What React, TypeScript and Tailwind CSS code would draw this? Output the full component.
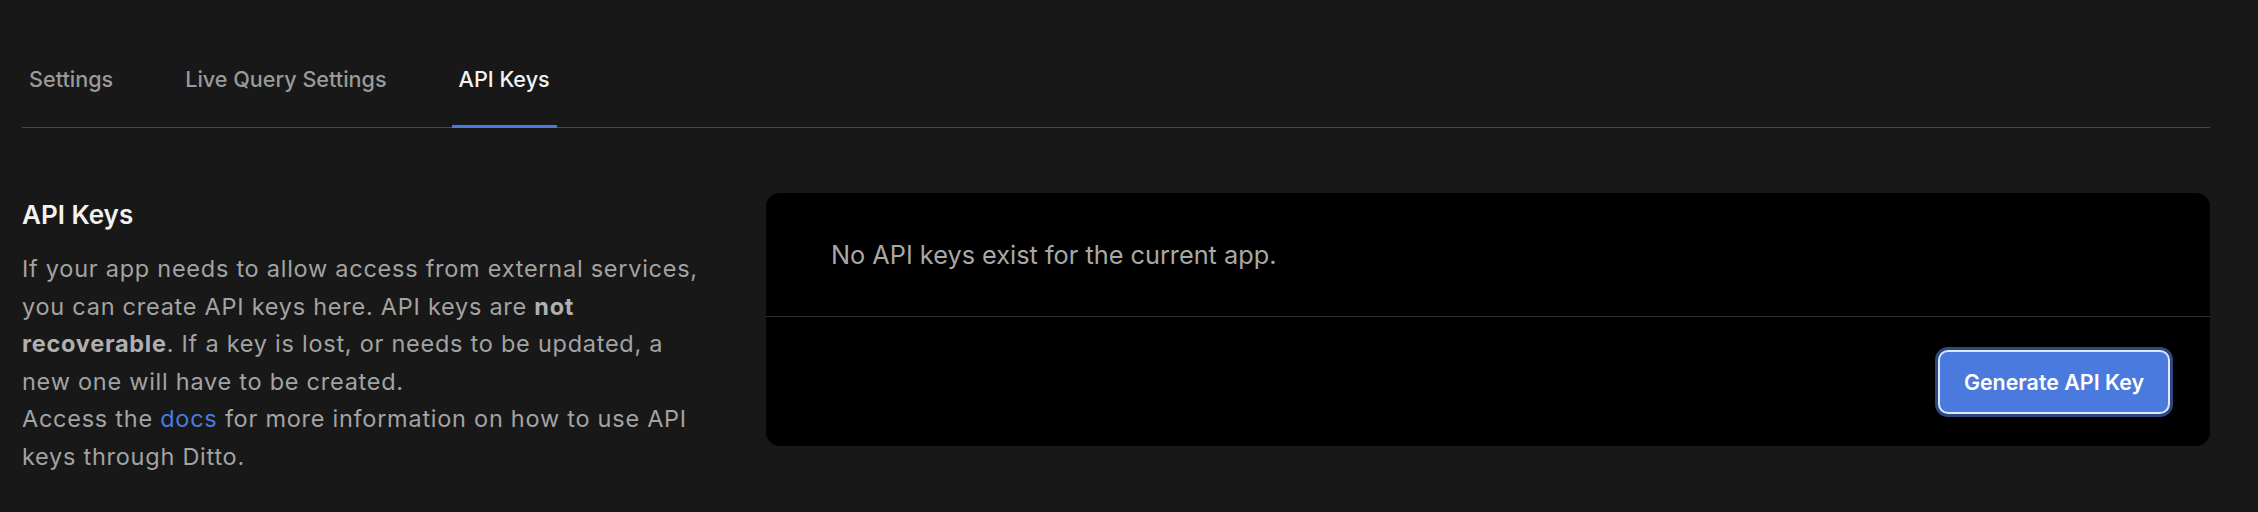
import React, { useState } from "react";

const tabs = ["Settings", "Live Query Settings", "API Keys"];

const App: React.FC = () => {
  const [activeTab, setActiveTab] = useState<string>("API Keys");

  return (
    <div
      className="min-h-screen w-full bg-[#181818] pl-[22px] pr-[48px] pt-[63px]"
      style={{ fontFamily: "Inter, 'Noto Sans', sans-serif" }}
    >
      {/* Tabs */}
      <nav className="flex gap-[58px] border-b border-[#4a4a4a]">
        {tabs.map((tab) => (
          <button
            key={tab}
            type="button"
            onClick={() => setActiveTab(tab)}
            className={
              activeTab === tab
                ? "-mb-px border-b-[3px] border-[#4a7ade] px-[7px] pb-[30px] text-[21.6px] leading-[32px] font-medium text-[#f2f2f2]"
                : "-mb-px border-b-[3px] border-transparent px-[7px] pb-[30px] text-[21.6px] leading-[32px] font-medium text-[#9a9a9a]"
            }
          >
            {tab}
          </button>
        ))}
      </nav>

      <div className="mt-[65px] flex items-start gap-[60px]">
        {/* Description */}
        <div className="w-[684px] shrink-0 pt-[4px]">
          <h2 className="text-[26px] leading-[36px] font-semibold text-[#f2f2f2]">
            API Keys
          </h2>
          <p className="mt-[17px] text-[23.5px] leading-[37.6px] tracking-[0.74px] text-[#a3a3a3]">
            If your app needs to allow access from external services, you can
            create API keys here. API keys are{" "}
            <strong className="font-bold text-[#b0b0b0]">not recoverable</strong>. If
            a key is lost, or needs to be updated, a new one will have to be
            created.
            <br />
            Access the{" "}
            <a href="#" className="text-[#4a7ade]">
              docs
            </a>{" "}
            for more information on how to use API keys through Ditto.
          </p>
        </div>

        {/* Keys card */}
        <div className="flex-1 rounded-[14px] bg-black">
          <div className="flex h-[124px] items-center border-b border-[#2e2e2e] pl-[65px]">
            <p className="text-[25.3px] leading-[34px] text-[#a8a8a8]">
              No API keys exist for the current app.
            </p>
          </div>
          <div className="flex justify-end pt-[33px] pr-[40px] pb-[32px]">
            <button
              type="button"
              className="rounded-[10px] border-2 border-[#dfe7fa] bg-[#4a7ade] px-[24px] py-[16px] text-[21.4px] leading-[28px] font-semibold text-white shadow-[0_0_0_3px_#2d4882]"
            >
              Generate API Key
            </button>
          </div>
        </div>
      </div>
    </div>
  );
};

export default App;
